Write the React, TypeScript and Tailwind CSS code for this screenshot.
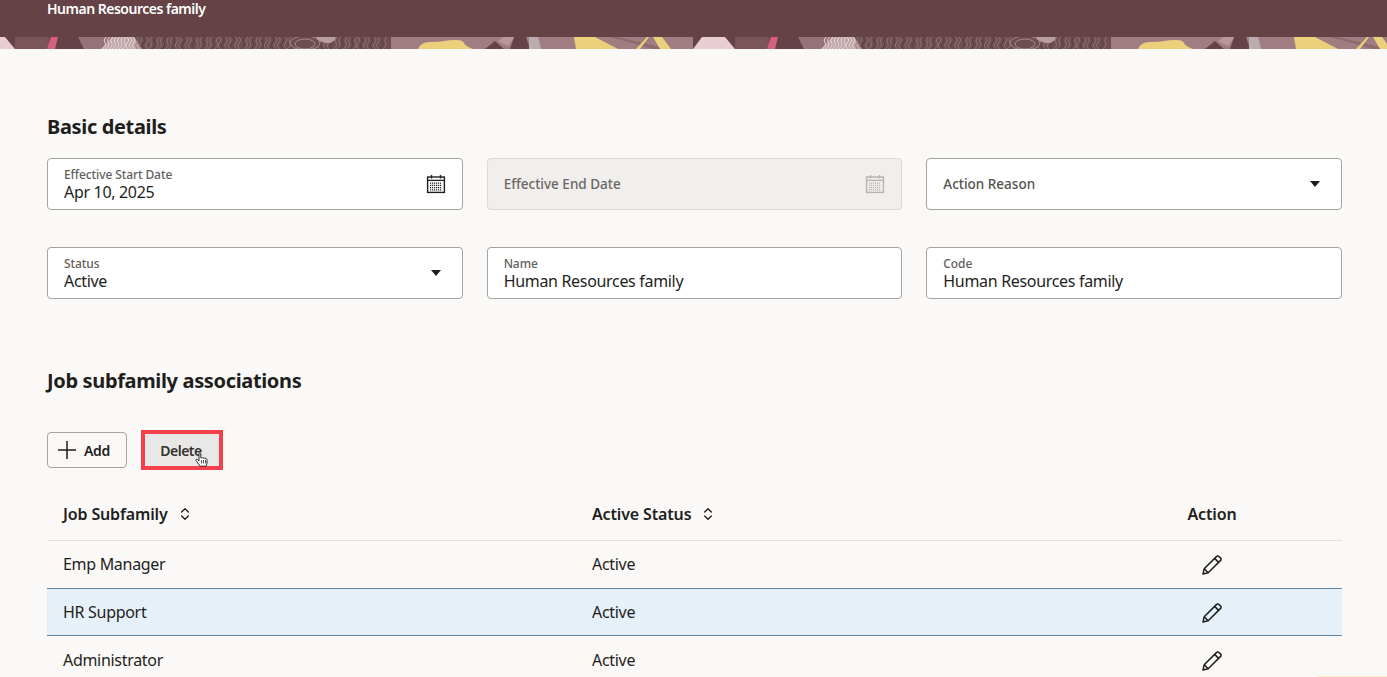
import { ChevronsUpDown } from 'lucide-react'

const rows = [
  { name: 'Emp Manager', status: 'Active', selected: false },
  { name: 'HR Support', status: 'Active', selected: true },
  { name: 'Administrator', status: 'Active', selected: false },
]

const grain = Array.from({ length: 86 }, (_, i) => 104 + i * 3.3)

function CalendarIcon({ className }: { className: string }) {
  return (
    <svg viewBox="0 0 20 20" className={className} fill="none" stroke="currentColor">
      <rect x="1.6" y="3" width="16.8" height="15.4" strokeWidth="1.4" />
      <path d="M5.5 1v3.5M14.5 1v3.5M2 6.4h16" strokeWidth="1.4" />
      <path d="M4 9.2h12M4 11.4h12M4 13.6h12M4 15.8h12" strokeWidth="1.2" strokeDasharray="1.2 0.8" />
    </svg>
  )
}

function PencilIcon() {
  return (
    <svg viewBox="0 0 22 22" className="mt-[2px] w-[22px] h-[22px] text-[#1f1e1c]" fill="none" stroke="currentColor" strokeWidth="1.5">
      <path d="M2 20l1.2-5.2L15.6 2.4a1.6 1.6 0 0 1 2.3 0l1.7 1.7a1.6 1.6 0 0 1 0 2.3L7.2 18.8 2 20z" strokeLinejoin="round" />
      <path d="M13.6 4.4l4 4M3.2 14.8l4 4" />
    </svg>
  )
}

function CaretDown() {
  return (
    <svg viewBox="0 0 10 6" className="w-[10px] h-[6px] text-[#1f1e1c]" fill="currentColor">
      <path d="M0 0h10L5 6z" />
    </svg>
  )
}

function PlusIcon() {
  return (
    <svg viewBox="0 0 18 18" className="w-[18px] h-[18px]" fill="none" stroke="currentColor" strokeWidth="1.5">
      <path d="M9 0v18M0 9h18" />
    </svg>
  )
}

function HandCursor() {
  return (
    <svg viewBox="0 0 14 17" className="absolute left-[50px] top-[18px] w-[14px] h-[17px]">
      <path
        d="M4 1.2c.8-.7 1.8-.2 1.8.8v4l.9-.3 1 .3 1-.1 1 .4 1.3.1c.8.3 1 1 1 1.8v3l-1 3H5.2L2.8 11 1 8.4c-.3-.9.6-1.4 1.3-1L4 8.8V2z"
        fill="#fff"
        stroke="#1a1a1a"
        strokeWidth="0.9"
        strokeLinejoin="round"
      />
      <path d="M6.6 8v3.4M8.6 8v3.4M10.6 8v3.4" stroke="#1a1a1a" strokeWidth="0.8" />
    </svg>
  )
}

// one repeat of the artwork under the title bar
function BannerTile({ offset }: { offset: number }) {
  return (
    <g transform={`translate(${offset} 0)`}>
      <rect x="-27" width="747" height="12" fill="#644245" />
      <rect x="15" width="34" height="12" fill="#7a5458" />
      <path d="M-27 12L-18 0H5L15 12z" fill="#e8cdd3" />
      <path d="M47 12L51 0H58L55 12z" fill="#d5607f" />
      <path d="M78 0H130V12H84z" fill="#96737a" />
      <rect x="130" width="261" height="12" fill="#6f4e52" />
      <path d="M101 12L112 0H134L142 12z" fill="#bfa4a8" />
      {grain.map((x, i) => (
        <path
          key={x}
          d={Math.floor(i / 7) % 2 ? `M${x} 0q3 3 0 6t1 6` : `M${x + 2} 0q-3 3 -1 6t-3 6`}
          fill="none"
          stroke={i < 10 ? '#e9dcdc' : i % 3 ? '#93767a' : '#543a3e'}
          strokeWidth="0.9"
        />
      ))}
      <ellipse cx="305" cy="6" rx="15" ry="7" fill="#6f4e52" stroke="#a68a8d" strokeWidth="1" />
      <ellipse cx="305" cy="7" rx="10" ry="5" fill="none" stroke="#a68a8d" strokeWidth="1" />
      <path d="M316 0h20q-2 7-10 6t-10-6z" fill="#b79da0" />
      <rect x="391" width="329" height="12" fill="#a07d82" />
      <path d="M418 12q3-7 12-7t14-1 12-1 8 3 9 6z" fill="#ecd07c" />
      <path d="M485 12l10-8 9 8z" fill="#644245" />
      <path d="M498 4l6-4h11l-7 9z" fill="#b9999c" />
      <path d="M510 12l4-12h12l4 12z" fill="#644245" />
      <path d="M529 12V0h9l3 12z" fill="#b9adb1" />
      <path d="M576 12L574 0h21l23 12z" fill="#ecd07c" />
      <path d="M618 0l50 12h-14L610 0z" fill="#8d6a6e" />
      <path d="M636 12l11-12h2l-9 12z" fill="#ecd07c" />
      <path d="M653 0h9l9 12h-11z" fill="#ecd07c" />
    </g>
  )
}

function Field({ label, value, disabled, icon }: { label: string; value?: string; disabled?: boolean; icon?: 'calendar' | 'caret' }) {
  return (
    <div
      className={
        'h-[52px] rounded-[4px] border-[1.5px] flex items-center justify-between pl-4 pr-[16px] ' +
        (disabled ? 'bg-[#f0efed] border-[#dcdad7]' : 'bg-white border-[#a5a3a0]')
      }
    >
      {value ? (
        <div className="flex flex-col pt-[2px]">
          <span className="text-[12px] leading-[14px] font-medium tracking-[-0.1px] text-[#62605c]">{label}</span>
          <span className="text-[16px] leading-[20px] tracking-[-0.32px] text-[#1f1e1c]">{value}</span>
        </div>
      ) : (
        <span className={'text-[13.5px] font-medium ' + (disabled ? 'text-[#6a6764]' : 'text-[#55524e]')}>{label}</span>
      )}
      {icon === 'calendar' && (
        <CalendarIcon className={'w-[20px] h-[20px] ' + (disabled ? 'text-[#b5b3b0]' : 'text-[#1f1e1c]')} />
      )}
      {icon === 'caret' && (
        <div className="pr-[5px]">
          <CaretDown />
        </div>
      )}
    </div>
  )
}

export default function App() {
  return (
    <div className="relative h-[677px] overflow-hidden bg-[#faf9f7] font-['Noto_Sans',sans-serif] text-[#1f1e1c]">
      {/* Title bar */}
      <div className="h-[37px] bg-[#644245] pl-[47px]">
        <p className="text-[14px] leading-[18px] font-semibold tracking-[-0.5px] text-white">Human Resources family</p>
      </div>
      <svg viewBox="0 0 1387 12" className="block w-[1387px] h-[12px]" preserveAspectRatio="none">
        <BannerTile offset={0} />
        <BannerTile offset={720} />
      </svg>

      <div className="pl-[47px] pr-[45px]">
        {/* Basic details */}
        <h2 className="mt-[64px] text-[20px] leading-[28px] font-bold tracking-[-0.35px]">Basic details</h2>
        <div className="mt-[17px] grid grid-cols-3 gap-x-[24px] gap-y-[37px]">
          <Field label="Effective Start Date" value="Apr 10, 2025" icon="calendar" />
          <Field label="Effective End Date" disabled icon="calendar" />
          <Field label="Action Reason" icon="caret" />
          <Field label="Status" value="Active" icon="caret" />
          <Field label="Name" value="Human Resources family" />
          <Field label="Code" value="Human Resources family" />
        </div>

        {/* Job subfamily associations */}
        <h2 className="mt-[68px] text-[20px] leading-[28px] font-bold tracking-[-0.35px]">Job subfamily associations</h2>
        <div className="mt-[35px] flex items-center gap-[14px]">
          <button className="w-[80px] h-[36px] rounded-[4px] border border-[#a5a3a0] flex items-center pl-[10px] gap-[8px] text-[14px] font-semibold tracking-[-0.3px]">
            <PlusIcon />
            Add
          </button>
          <button className="relative w-[82px] h-[40px] border-[4px] border-[#f4404a] bg-[#e9e8e6] pr-[2px] text-[14px] font-semibold tracking-[-0.5px] text-[#33312e]">
            Delete
            <HandCursor />
          </button>
        </div>

        {/* Table */}
        <div className="mt-[16px] pt-[1px] grid grid-cols-[545px_490px_260px] h-[55px] items-center border-b border-[#e4e2df] text-[16px] font-semibold tracking-[-0.15px]">
          <div className="pl-4 flex items-center gap-[9px]">
            Job Subfamily
            <ChevronsUpDown className="w-[16px] h-[16px]" strokeWidth={2} />
          </div>
          <div className="flex items-center gap-[9px]">
            Active Status
            <ChevronsUpDown className="w-[16px] h-[16px]" strokeWidth={2} />
          </div>
          <div className="text-center">Action</div>
        </div>
        {rows.map((row, i) => (
          <div
            key={row.name}
            className={
              'grid grid-cols-[545px_490px_260px] items-center text-[16px] tracking-[-0.3px] ' +
              (i === 0 ? 'h-[47px] pb-[1px] ' : 'h-[48px] ') +
              (row.selected ? 'bg-[#e5f0f8] border-y border-[#5f87a3]' : '')
            }
          >
            <div className="pl-4">{row.name}</div>
            <div>{row.status}</div>
            <div className="flex justify-center">
              <PencilIcon />
            </div>
          </div>
        ))}
      </div>

      {/* Edge of a toast coming in at the bottom right */}
      <div className="absolute right-0 bottom-0 w-[69px] h-[1px] bg-[#fbe9c8]" />
    </div>
  )
}
